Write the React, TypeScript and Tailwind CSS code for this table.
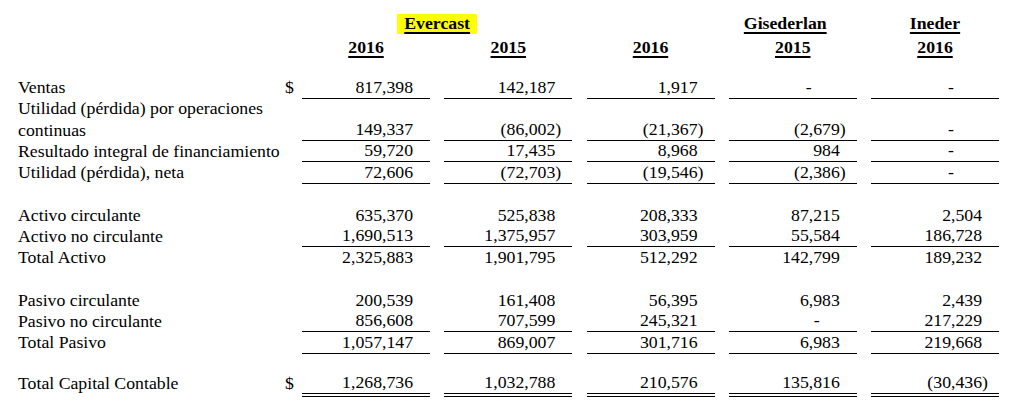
type Line = "none" | "single" | "double";

type Row = {
  label?: string;
  dollar?: boolean;
  values?: string[];
  line?: Line;
  gap?: string;
};

const rows: Row[] = [
  { label: "Ventas", dollar: true, values: ["817,398", "142,187", "1,917", "-", "-"], line: "single" },
  { label: "Utilidad (pérdida) por operaciones" },
  { label: "continuas", values: ["149,337", "(86,002)", "(21,367)", "(2,679)", "-"], line: "single" },
  { label: "Resultado integral de financiamiento", values: ["59,720", "17,435", "8,968", "984", "-"], line: "single" },
  { label: "Utilidad (pérdida), neta", values: ["72,606", "(72,703)", "(19,546)", "(2,386)", "-"], line: "single" },
  { gap: "h-[21.25px]" },
  { label: "Activo circulante", values: ["635,370", "525,838", "208,333", "87,215", "2,504"] },
  { label: "Activo no circulante", values: ["1,690,513", "1,375,957", "303,959", "55,584", "186,728"], line: "single" },
  { label: "Total Activo", values: ["2,325,883", "1,901,795", "512,292", "142,799", "189,232"] },
  { gap: "h-[21.25px]" },
  { label: "Pasivo circulante", values: ["200,539", "161,408", "56,395", "6,983", "2,439"] },
  { label: "Pasivo no circulante", values: ["856,608", "707,599", "245,321", "--", "217,229"], line: "single" },
  { label: "Total Pasivo", values: ["1,057,147", "869,007", "301,716", "6,983", "219,668"], line: "single" },
  { gap: "h-[19.5px]" },
  { label: "Total Capital Contable", dollar: true, values: ["1,268,736", "1,032,788", "210,576", "135,816", "(30,436)"], line: "double" },
];

const headLink = "font-bold underline decoration-[1.5px] underline-offset-[3px]";

function Value({ v }: { v: string }) {
  if (v === "-") return <span className="mr-[34px]">-</span>;
  if (v === "--") return <span className="mr-[26px]">-</span>;
  if (v.endsWith(")")) return <span>{v}</span>;
  return (
    <span>
      {v}
      <span className="invisible">)</span>
    </span>
  );
}

function Cell({ v, line }: { v?: string; line: Line }) {
  const border =
    line === "single"
      ? "h-[21.25px] border-b border-black"
      : line === "double"
        ? "h-[24.25px] border-b-4 border-double border-black"
        : "h-[21.25px]";
  return (
    <div className={`flex w-[128px] items-center justify-end pr-[11px] ${border}`}>
      {v && <Value v={v} />}
    </div>
  );
}

export default function App() {
  return (
    <div className="h-[413px] w-[1011px] bg-white pl-[18px] pt-[13px] font-['Liberation_Serif',serif] text-[17.75px] leading-none text-black">
      {/* headers */}
      <div className="flex h-[22px] items-center">
        <div className="w-[284px]" />
        <div className="flex w-[270.25px] justify-center">
          <span className={`bg-[#ffff00] px-[7px] py-[1px] ${headLink}`}>Evercast</span>
        </div>
        <div className="w-[156.5px]" />
        <div className="flex w-[128px] justify-center pr-[15px]">
          <span className={headLink}>Gisederlan</span>
        </div>
        <div className="ml-[14.25px] flex w-[128px] justify-center">
          <span className={headLink}>Ineder</span>
        </div>
      </div>
      <div className="mt-[2px] flex h-[22px] items-center">
        <div className="w-[284px]" />
        <div className="flex gap-[14.25px]">
          {["2016", "2015", "2016", "2015", "2016"].map((y, i) => (
            <div key={i} className="flex w-[128px] justify-center">
              <span className={headLink}>{y}</span>
            </div>
          ))}
        </div>
      </div>
      <div className="h-[18.3px]" />

      {/* body */}
      {rows.map((r, i) =>
        r.gap ? (
          <div key={i} className={r.gap} />
        ) : (
          <div key={i} className="flex items-start">
            <div className="flex h-[21.25px] w-[267px] items-center whitespace-nowrap">{r.label}</div>
            <div className="flex h-[21.25px] w-[17px] items-center">{r.dollar ? "$" : ""}</div>
            <div className="flex gap-[14.25px]">
              {r.values
                ? r.values.map((v, j) => <Cell key={j} v={v} line={r.line ?? "none"} />)
                : [0, 1, 2, 3, 4].map((j) => <Cell key={j} line="none" />)}
            </div>
          </div>
        ),
      )}
    </div>
  );
}
